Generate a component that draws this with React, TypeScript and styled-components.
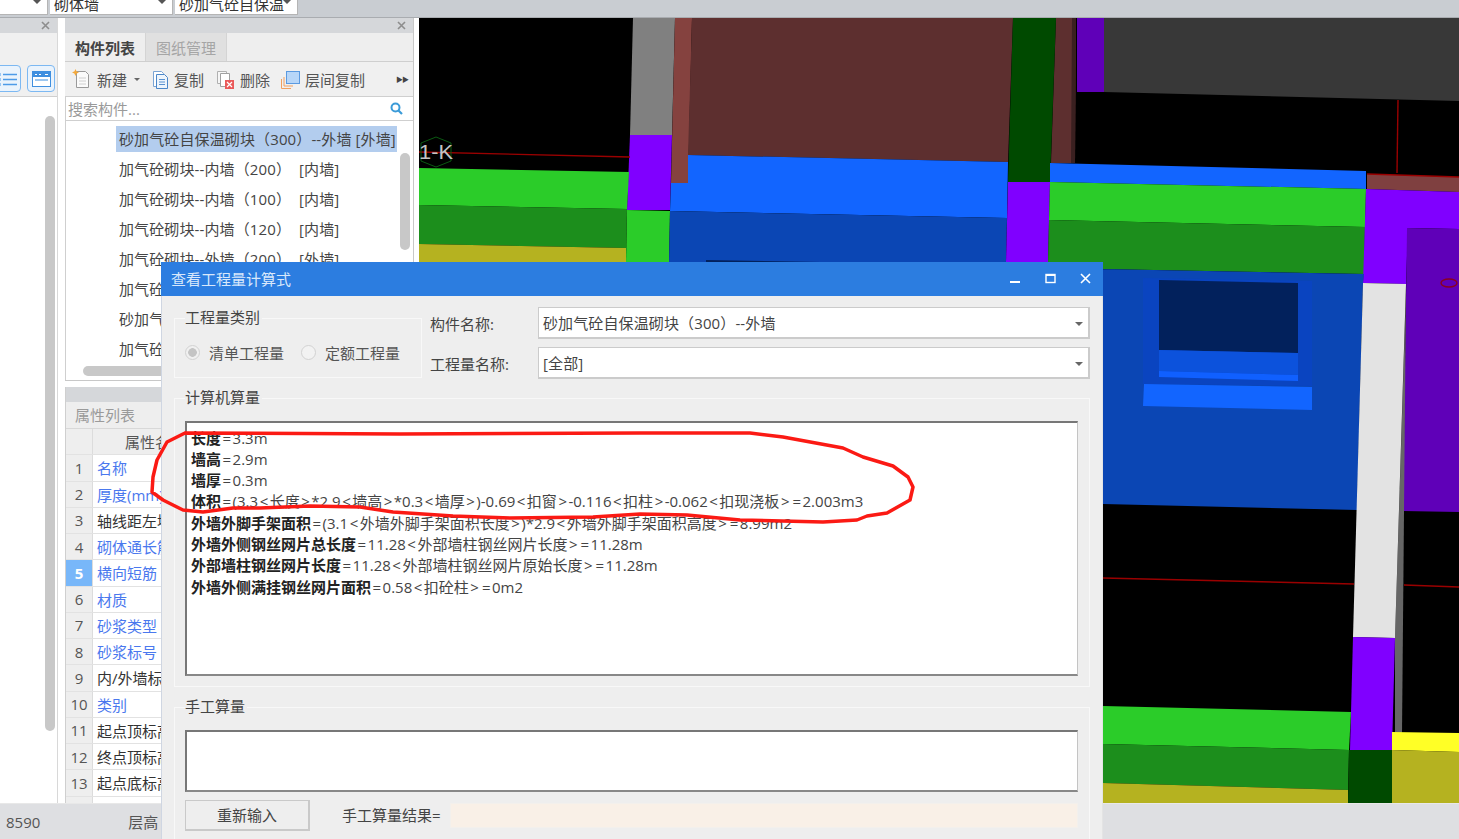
import React from "react";
import styled, { createGlobalStyle } from "styled-components";

const FONT = `"Open Sans", "Noto Sans CJK SC", "Liberation Sans", sans-serif`;

const Global = createGlobalStyle`
  html, body { margin: 0; padding: 0; background: #fff; }
  * { box-sizing: border-box; }
  body { font-family: ${FONT}; font-size: 15px; color: #333; }
`;

const Page = styled.div`
  position: relative;
  width: 1459px;
  height: 839px;
  overflow: hidden;
  display: flex;
  flex-direction: column;
  background: #fff;
`;

const TopBar = styled.div`
  flex: 0 0 18px;
  display: flex;
  gap: 2px;
  background: #c9cdd2;
  border-bottom: 1px solid #a9acb0;
`;
const ComboStub = styled.div<{ $w: number }>`
  position: relative;
  width: ${(p) => p.$w}px;
  height: 15px;
  background: #fff;
  border-right: 1px solid #b5b5b5;
  border-bottom: 1px solid #b5b5b5;
  overflow: hidden;
  padding-left: 4px;
  font-size: 15px;
  line-height: 8px;
  white-space: nowrap;
  color: #333;
  &::after {
    content: "";
    position: absolute;
    right: 6px;
    top: 0;
    border: 4px solid transparent;
    border-top-color: #555;
  }
`;

const Middle = styled.div`
  flex: 1;
  min-height: 0;
  display: flex;
`;

const LeftPanel = styled.div`
  flex: 0 0 58px;
  display: flex;
  flex-direction: column;
  overflow: hidden;
  border-right: 1px solid #d8d8d8;
`;
const PanelHead = styled.div`
  flex: 0 0 15px;
  background: #d5d7da;
  display: flex;
  justify-content: flex-end;
  align-items: center;
  padding-right: 7px;
`;
const LeftTools = styled.div`
  flex: 0 0 64px;
  background: #f0f0f0;
  border-bottom: 1px solid #cfcfcf;
  display: flex;
  gap: 6px;
  padding: 32px 2px 0 0;
  justify-content: flex-end;
`;
const ViewBtn = styled.div`
  flex: 0 0 28px;
  height: 27px;
  border: 1px solid #7cb8f2;
  border-radius: 4px;
  background: #eaf3fc;
  display: flex;
  align-items: center;
  justify-content: center;
`;
const LeftBody = styled.div`
  flex: 1;
  padding: 19px 0 0 45px;
`;
const VThumb = styled.div`
  width: 10px;
  height: 615px;
  border-radius: 5px;
  background: #c8c8c8;
`;

const Gutter = styled.div<{ $w: number }>`
  flex: 0 0 ${(p) => p.$w}px;
  background: #fff;
`;

const ComponentColumn = styled.div`
  flex: 0 0 349px;
  display: flex;
  flex-direction: column;
  gap: 6px;
`;
const ListPanel = styled.div`
  flex: 0 0 363px;
  display: flex;
  flex-direction: column;
  border-right: 1px solid #c8c8c8;
  border-bottom: 1px solid #c8c8c8;
  overflow: hidden;
`;
const Tabs = styled.div`
  flex: 0 0 29px;
  display: flex;
  background: #eee;
  border-bottom: 1px solid #cfcfcf;
`;
const Tab = styled.div<{ $active?: boolean }>`
  width: 81px;
  display: flex;
  align-items: center;
  justify-content: center;
  font-weight: ${(p) => (p.$active ? 700 : 400)};
  color: ${(p) => (p.$active ? "#444" : "#a5a5a5")};
  background: ${(p) => (p.$active ? "#eee" : "#e0e0e0")};
  border-right: 1px solid #d4d4d4;
`;
const Tools = styled.div`
  flex: 0 0 35px;
  display: flex;
  align-items: center;
  background: #f0f0f0;
  border-bottom: 1px solid #cfcfcf;
  padding-left: 7px;
  color: #555;
`;
const Tool = styled.div<{ $gap: number }>`
  display: flex;
  align-items: center;
  gap: 5px;
  margin-right: ${(p) => p.$gap}px;
  white-space: nowrap;
`;
const Caret = styled.span`
  width: 0;
  height: 0;
  border: 3.5px solid transparent;
  border-top-color: #666;
  margin: 4px 0 0 2px;
`;
const More = styled.span`
  margin-left: auto;
  margin-right: 5px;
  font-size: 7px;
  letter-spacing: -1px;
  color: #444;
`;
const Search = styled.div`
  flex: 0 0 24px;
  display: flex;
  align-items: center;
  justify-content: space-between;
  padding: 0 10px 0 2px;
  background: #fff;
  border-bottom: 1px solid #cfcfcf;
  border-left: 1px solid #cfcfcf;
  color: #9a9a9a;
`;
const List = styled.div`
  position: relative;
  flex: 1;
  padding: 5px 0 0 50px;
  background: #fff;
  overflow: hidden;
  border-left: 1px solid #cfcfcf;
`;
const ListRow = styled.div<{ $selected?: boolean }>`
  width: 281px;
  height: 30px;
  display: flex;
  align-items: center;
  padding: 0 0 2px 3px;
  white-space: pre;
  overflow: hidden;
  letter-spacing: 0.12px;
  color: #444;
  &:first-child {
    height: 26px;
    margin-bottom: 2px;
  }
  background: ${(p) => (p.$selected ? "#b3cdee" : "transparent")};
`;
const ListVThumb = styled.div`
  position: absolute;
  left: 334px;
  top: 32px;
  width: 10px;
  height: 97px;
  border-radius: 5px;
  background: #c8c8c8;
`;
const ListHThumb = styled.div`
  position: absolute;
  left: 17px;
  bottom: 4px;
  width: 200px;
  height: 10px;
  border-radius: 5px;
  background: #c8c8c8;
`;

const PropPanel = styled.div`
  flex: 1;
  min-height: 0;
  display: flex;
  flex-direction: column;
  overflow: hidden;
  border-left: 1px solid #cfcfcf;
`;
const PropHead = styled.div`
  flex: 0 0 15px;
  background: #d5d7da;
`;
const PropTitle = styled.div`
  flex: 0 0 27px;
  background: #eee;
  display: flex;
  align-items: center;
  padding: 0 0 2px 9px;
  color: #9a9a9a;
  border-bottom: 1px solid #d8d8d8;
`;
const PropRow = styled.div`
  flex: 0 0 26.25px;
  display: grid;
  grid-template-columns: 27px 1fr;
  border-bottom: 1.5px solid #e2e2e2;
`;
const PropHeadRow = styled(PropRow)`
  background: #eee;
`;
const NumCell = styled.div<{ $active?: boolean }>`
  display: flex;
  align-items: center;
  justify-content: center;
  font-size: 15px;
  font-weight: ${(p) => (p.$active ? 700 : 400)};
  color: ${(p) => (p.$active ? "#fff" : "#555")};
  background: ${(p) => (p.$active ? "#78b7f9" : "#eee")};
  border-right: 1.5px solid #dcdcdc;
`;
const NameCell = styled.div<{ $link?: boolean }>`
  display: flex;
  align-items: center;
  padding-left: 4px;
  white-space: nowrap;
  background: #fff;
  color: ${(p) => (p.$link ? "#4a78ee" : "#333")};
`;
const HeadCell = styled.div`
  display: flex;
  align-items: center;
  padding-left: 32px;
  color: #555;
`;

const Viewport = styled.div`
  flex: 1;
  min-width: 0;
  background: #000;
  line-height: 0;
`;
const Scene = styled.svg`
  display: block;
  width: 100%;
  height: 100%;
`;

const StatusBar = styled.div`
  flex: 0 0 36px;
  display: flex;
  align-items: center;
  gap: 88px;
  padding-left: 6px;
  background: #dedfe2;
  border-top: 1px solid #e8e8e8;
  color: #555;
`;

const Dialog = styled.div`
  position: absolute;
  left: 161px;
  top: 262px;
  width: 942px;
  height: 577px;
  display: flex;
  flex-direction: column;
  background: #eee;
  border-left: 1px solid #cfd6e2;
  border-right: 1px solid #e4e4e4;
`;
const TitleBar = styled.div`
  flex: 0 0 34px;
  margin: 0 -1px;
  display: flex;
  align-items: center;
  justify-content: space-between;
  padding: 0 12px 2px 10px;
  background: #2c7de0;
  color: #d9e8fb;
`;
const WinButtons = styled.div`
  display: flex;
  gap: 24px;
  align-items: center;
`;
const DialogBody = styled.div`
  flex: 1;
  min-height: 0;
  padding: 11px 12px 0 12px;
  overflow: hidden;
`;
const TopRow = styled.div`
  display: flex;
  height: 72px;
`;
const Group = styled.div`
  border: 1px solid #f8f8f8;
  padding: 0 11px 0 10px;
`;
const CategoryGroup = styled(Group)`
  flex: 0 0 248px;
  height: 60px;
  margin-top: 11px;
`;
const GroupTitle = styled.div`
  width: fit-content;
  height: 20px;
  margin: -12px 0 1px 0;
  padding-right: 2px;
  line-height: 20px;
  background: #eee;
  color: #444;
`;
const Radios = styled.div`
  display: flex;
  align-items: center;
  gap: 17px;
  margin-top: 15px;
  color: #555;
`;
const RadioItem = styled.div`
  display: flex;
  align-items: center;
  gap: 9px;
`;
const RadioDot = styled.span<{ $on?: boolean }>`
  width: 15px;
  height: 15px;
  border-radius: 50%;
  border: 1px solid #d2d2d2;
  background: ${(p) =>
    p.$on
      ? "radial-gradient(circle, #c4c4c4 0 4px, #f0f0f0 4.6px)"
      : "#f2f2f2"};
`;
const FormCol = styled.div`
  flex: 1;
  margin-left: 8px;
  display: flex;
  flex-direction: column;
  gap: 8px;
`;
const FormRow = styled.div`
  display: flex;
  align-items: center;
  height: 32px;
`;
const FormLabel = styled.div`
  flex: 0 0 108px;
  color: #444;
`;
const Combo = styled.div`
  position: relative;
  flex: 1;
  height: 32px;
  display: flex;
  align-items: center;
  padding-left: 4px;
  background: #fff;
  border: 2px solid #cbcbcb;
  border-width: 1px 2px 2px 1px;
  color: #444;
  white-space: pre;
  letter-spacing: 0.12px;
  &::after {
    content: "";
    position: absolute;
    right: 5px;
    top: 14px;
    border: 4px solid transparent;
    border-top-color: #666;
  }
`;
const CalcGroup = styled(Group)`
  margin-top: 19px;
  height: 289px;
`;
const ManualGroup = styled(Group)`
  margin-top: 20px;
  height: 140px;
`;
const GroupGap = styled.div`
  height: 13px;
`;
const TextBox = styled.div<{ $h: number }>`
  height: ${(p) => p.$h}px;
  background: #fff;
  border: 1px solid #c4c4c4;
  border-top: 2px solid #777;
  border-left: 2px solid #777;
  border-bottom: 2px solid #888;
  overflow: hidden;
`;
const CalcLines = styled.div`
  padding: 4.5px 0 0 4px;
`;
const CalcLine = styled.div`
  height: 21.3px;
  line-height: 21.3px;
  white-space: pre;
  color: #444;
  b {
    font-weight: 700;
    color: #222;
  }
`;
const Op = styled.span`
  padding: 0 1.5px;
`;
const ResultRow = styled.div`
  display: flex;
  align-items: center;
  margin-top: 8px;
`;
const RetypeBtn = styled.div`
  flex: 0 0 125px;
  height: 31px;
  display: flex;
  align-items: center;
  justify-content: center;
  padding-bottom: 2px;
  border: 1px solid #c9c9c9;
  border-width: 1px 2px 2px 1px;
  color: #444;
`;
const ResultLabel = styled.div`
  margin-left: 32px;
  padding-bottom: 2px;
  color: #444;
  white-space: nowrap;
`;
const ResultInput = styled.div`
  margin-left: auto;
  width: 628px;
  height: 25px;
  background: #f9f0e7;
  border: 1px solid #f3f0ec;
`;

const Annotation = styled.svg`
  position: absolute;
  left: 0;
  top: 0;
  pointer-events: none;
`;

const polys: [string, string][] = [
  ["633,18 675,18 672,135 630,135", "#808080"],
  ["675,18 692,18 688,183 671,183", "#85423f"],
  ["692,18 1013,18 1008,162 688,155", "#5d2f2f"],
  ["1056,18 1076,18 1075,163 1051,163", "#5d2f2f"],
  ["1072,18 1076,18 1075,163 1071,163", "#3a2020"],
  ["1013,18 1056,18 1050,182 1008,182", "#004a00"],
  ["1077,18 1104,18 1104,92 1077,92", "#5f00b8"],
  ["1104,18 1459,18 1459,101 1104,92", "#383838"],
  ["630,135 672,135 670,210 627,210", "#8000ff"],
  ["419,168 629,172 627,209 419,205", "#2bcc29"],
  ["419,205 627,209 626,248 419,244", "#1c8e1c"],
  ["419,244 626,248 626,262 419,262", "#b5b220"],
  ["627,210 670,211 669,262 626,262", "#2bcc29"],
  ["688,155 1008,162 1007,218 670,211 671,183 688,183", "#1265ff"],
  ["670,211 1007,218 1006,262 669,262", "#0b46b4"],
  ["706,260 820,262 706,262", "#02215c"],
  ["1008,182 1050,182 1048,262 1006,262", "#8000ff"],
  ["1050,163 1366,171 1366,189 1050,182", "#1265ff"],
  ["1050,182 1366,189 1365,227 1049,220", "#2bcc29"],
  ["1049,220 1365,227 1364,274 1048,268 1048,262", "#1c8e1c"],
  ["1367,174 1459,177 1459,192 1367,189", "#7f4040"],
  ["1366,189 1459,192 1459,229 1408,228 1406,284 1363,283", "#8000ff"],
  ["1407,228 1459,229 1459,512 1403,511", "#5f00b8"],
  ["1103,262 1048,262 1048,268 1364,274 1363,283 1357,510 1103,504", "#0b46b4"],
  ["1143,278 1312,281 1312,386 1143,384", "#0a44c0"],
  ["1159,280 1298,283 1298,353 1159,350", "#02215c"],
  ["1159,350 1298,353 1298,375 1159,371", "#0c52dc"],
  ["1159,371 1298,375 1298,381 1159,377", "#1060ff"],
  ["1144,384 1312,387 1312,410 1143,406", "#1265ff"],
  ["1406,290 1402,733 1395,733 1395,638", "#666666"],
  ["1363,283 1406,284 1395,638 1353,637", "#e3e3e3"],
  ["1353,637 1395,638 1392,750 1350,750", "#8000ff"],
  ["1103,706 1351,712 1349,750 1103,744", "#2bcc29"],
  ["1103,744 1349,750 1348,790 1103,783", "#1c8e1c"],
  ["1103,783 1348,790 1348,803 1103,803", "#b5b220"],
  ["1349,750 1392,750 1392,803 1348,803", "#004a00"],
  ["1392,732 1459,733 1459,752 1392,750", "#ffff26"],
  ["1392,750 1459,752 1459,803 1392,803", "#b5b220"],
];

const redLines: string[] = [
  "419,152 630,157",
  "1367,174 1459,177",
  "1398,100 1397,173",
  "1103,578 1354,584",
  "1404,585 1459,587",
];

const redPath =
  "185,433 167,442 157,460 153,477 152,492 163,500 183,510 203,512 233,508 260,508 310,506 360,507 393,512 453,516 510,518 593,517 640,514 687,515 740,520 823,522 857,520 867,516 887,513 910,500 913,487 908,477 893,466 863,457 843,448 783,437 750,433 640,433 400,434 185,433";

const listRows = [
  "砂加气砼自保温砌块（300）--外墙 [外墙]",
  "加气砼砌块--内墙（200）  [内墙]",
  "加气砼砌块--内墙（100）  [内墙]",
  "加气砼砌块--内墙（120）  [内墙]",
  "加气砼砌块--外墙（200）  [外墙]",
  "加气砼砌块--外墙（100）  [外墙]",
  "砂加气砼砌块--外墙（300）  [外墙]",
  "加气砼砌块--内墙（300）  [内墙]",
];

const props: [string, boolean][] = [
  ["名称", true],
  ["厚度(mm)", true],
  ["轴线距左墙皮距离(mm)", false],
  ["砌体通长筋", true],
  ["横向短筋", true],
  ["材质", true],
  ["砂浆类型", true],
  ["砂浆标号", true],
  ["内/外墙标志", false],
  ["类别", true],
  ["起点顶标高(m)", false],
  ["终点顶标高(m)", false],
  ["起点底标高(m)", false],
  ["", false],
];

const calc: [string, string][] = [
  ["长度", "=3.3m"],
  ["墙高", "=2.9m"],
  ["墙厚", "=0.3m"],
  ["体积", "=(3.3<长度>*2.9<墙高>*0.3<墙厚>)-0.69<扣窗>-0.116<扣柱>-0.062<扣现浇板>=2.003m3"],
  ["外墙外脚手架面积", "=(3.1<外墙外脚手架面积长度>)*2.9<外墙外脚手架面积高度>=8.99m2"],
  ["外墙外侧钢丝网片总长度", "=11.28<外部墙柱钢丝网片长度>=11.28m"],
  ["外部墙柱钢丝网片长度", "=11.28<外部墙柱钢丝网片原始长度>=11.28m"],
  ["外墙外侧满挂钢丝网片面积", "=0.58<扣砼柱>=0m2"],
];

const CloseX = () => (
  <svg width="9" height="9" viewBox="0 0 9 9">
    <path d="M1 1l7 7M8 1L1 8" stroke="#8d8d8d" strokeWidth="1.6" />
  </svg>
);

const NewIcon = () => (
  <svg width="20" height="20" viewBox="0 0 20 20">
    <path d="M4.5 2.5h9l3 3v13h-12z" fill="#fbfbfb" stroke="#9a9a9a" />
    <path d="M7 9h7M7 12h7M7 15h7" stroke="#d0d0d0" />
    <path d="M3.5 0l1 2.3L7 3.5 4.6 4.6 3.5 7 2.4 4.6 0 3.5l2.5-1.2z" fill="#f4a93c" />
  </svg>
);
const CopyIcon = () => (
  <svg width="17" height="19" viewBox="0 0 17 19">
    <path d="M1.5 1.5h8l2 2v13h-10z" fill="#fff" stroke="#7aa4d4" />
    <path d="M4.5 4.5h8l3 3v11h-11z" fill="#eef5fc" stroke="#4d87c8" />
    <path d="M7 9.5h6M7 12h6M7 14.5h6" stroke="#5b92d0" />
  </svg>
);
const DeleteIcon = () => (
  <svg width="19" height="19" viewBox="0 0 19 19">
    <path d="M1.5 1.5h9v12h-9z" fill="#f6f6f6" stroke="#b0b0b0" />
    <path d="M4.5 3.5h9v13h-9z" fill="#fff" stroke="#a0a0a0" />
    <rect x="9" y="10" width="9" height="9" fill="#ea5a5a" />
    <path d="M11 12l5 5M16 12l-5 5" stroke="#fff" strokeWidth="1.2" />
  </svg>
);
const FloorCopyIcon = () => (
  <svg width="19" height="19" viewBox="0 0 19 19">
    <path d="M.5 9v9.5H10M3 7v9h9" fill="none" stroke="#f0a060" />
    <rect x="5.5" y="1.5" width="13" height="12" fill="#b7d6f8" stroke="#5b9ae0" />
  </svg>
);
const SearchIcon = () => (
  <svg width="13" height="13" viewBox="0 0 13 13">
    <circle cx="5.5" cy="5.5" r="4" fill="none" stroke="#3b9bd8" strokeWidth="2" />
    <path d="M8.5 8.5L12 12" stroke="#3b9bd8" strokeWidth="2.2" />
  </svg>
);
const ListViewIcon = () => (
  <svg width="22" height="17" viewBox="0 0 22 17">
    <path d="M0 3h4v3H0zM0 8h4v3H0zM0 13h4v3H0z" fill="#fff" stroke="#4d9be8" />
    <path d="M7 4.5h14M7 9.5h14M7 14.5h14" stroke="#4d9be8" strokeWidth="1.4" />
  </svg>
);
const FormViewIcon = () => (
  <svg width="19" height="16" viewBox="0 0 19 16">
    <rect x=".5" y=".5" width="18" height="15" fill="#fff" stroke="#3f8fdf" />
    <rect x="1" y="1" width="17" height="5" fill="#3f8fdf" />
    <path d="M3 3.5h2M7 3.5h2M13 3.5h3" stroke="#fff" />
    <path d="M3 9h13" stroke="#9cc6ef" strokeWidth="2" />
  </svg>
);

const Formula = ({ text }: { text: string }) => (
  <>
    {text.split(/([=<>])/).map((part, i) =>
      /^[=<>]$/.test(part) ? <Op key={i}>{part}</Op> : <span key={i}>{part}</span>
    )}
  </>
);

export default function App() {
  return (
    <Page>
      <Global />
      <TopBar>
        <ComboStub $w={48} />
        <ComboStub $w={123}>砌体墙</ComboStub>
        <ComboStub $w={123}>砂加气砼自保温</ComboStub>
      </TopBar>
      <Middle>
        <LeftPanel>
          <PanelHead>
            <CloseX />
          </PanelHead>
          <LeftTools>
            <ViewBtn>
              <ListViewIcon />
            </ViewBtn>
            <ViewBtn>
              <FormViewIcon />
            </ViewBtn>
          </LeftTools>
          <LeftBody>
            <VThumb />
          </LeftBody>
        </LeftPanel>
        <Gutter $w={7} />
        <ComponentColumn>
          <ListPanel>
            <PanelHead>
              <CloseX />
            </PanelHead>
            <Tabs>
              <Tab $active>构件列表</Tab>
              <Tab>图纸管理</Tab>
            </Tabs>
            <Tools>
              <Tool $gap={12}>
                <NewIcon />
                新建
                <Caret />
              </Tool>
              <Tool $gap={12}>
                <CopyIcon />
                复制
              </Tool>
              <Tool $gap={11}>
                <DeleteIcon />
                删除
              </Tool>
              <Tool $gap={0}>
                <FloorCopyIcon />
                层间复制
              </Tool>
              <More>▶▶</More>
            </Tools>
            <Search>
              搜索构件...
              <SearchIcon />
            </Search>
            <List>
              {listRows.map((r, i) => (
                <ListRow key={r} $selected={i === 0}>
                  {r}
                </ListRow>
              ))}
              <ListVThumb />
              <ListHThumb />
            </List>
          </ListPanel>
          <PropPanel>
            <PropHead />
            <PropTitle>属性列表</PropTitle>
            <PropHeadRow>
              <NumCell />
              <HeadCell>属性名称</HeadCell>
            </PropHeadRow>
            {props.map(([name, link], i) => (
              <PropRow key={i}>
                <NumCell $active={i === 4}>{i < 13 ? i + 1 : ""}</NumCell>
                <NameCell $link={link}>{name}</NameCell>
              </PropRow>
            ))}
          </PropPanel>
        </ComponentColumn>
        <Gutter $w={5} />
        <Viewport>
          <Scene viewBox="419 18 1040 785" preserveAspectRatio="none">
            <rect x="419" y="18" width="1040" height="785" fill="#000" />
            {polys.map(([p, f], i) => (
              <polygon key={i} points={p} fill={f} />
            ))}
            {redLines.map((p) => (
              <polyline key={p} points={p} fill="none" stroke="#9a0000" strokeWidth="1.4" />
            ))}
            <polygon
              points="436,137 451,143 451,161 436,167 421,161 421,143"
              fill="none"
              stroke="#0b5a12"
              strokeWidth="1"
            />
            <text
              x="419"
              y="159"
              fontFamily="'Liberation Sans', sans-serif"
              fontSize="20"
              fill="#c4c4c4"
              textLength="34"
              lengthAdjust="spacingAndGlyphs"
            >
              1-K
            </text>
            <ellipse cx="1449" cy="283" rx="8" ry="4" fill="none" stroke="#8a0020" strokeWidth="1.4" />
          </Scene>
        </Viewport>
      </Middle>
      <StatusBar>
        <span>8590</span>
        <span>层高</span>
      </StatusBar>

      <Dialog>
        <TitleBar>
          查看工程量计算式
          <WinButtons>
            <svg width="11" height="11" viewBox="0 0 11 11">
              <rect x="0" y="8" width="10" height="2" fill="#fff" />
            </svg>
            <svg width="11" height="11" viewBox="0 0 11 11">
              <rect x="1" y="1.5" width="9" height="8" fill="none" stroke="#fff" strokeWidth="1.4" />
              <rect x="1" y="1" width="9" height="2" fill="#fff" />
            </svg>
            <svg width="11" height="11" viewBox="0 0 11 11">
              <path d="M1 1l9 9M10 1l-9 9" stroke="#fff" strokeWidth="1.6" />
            </svg>
          </WinButtons>
        </TitleBar>
        <DialogBody>
          <TopRow>
            <CategoryGroup>
              <GroupTitle>工程量类别</GroupTitle>
              <Radios>
                <RadioItem>
                  <RadioDot $on />
                  清单工程量
                </RadioItem>
                <RadioItem>
                  <RadioDot />
                  定额工程量
                </RadioItem>
              </Radios>
            </CategoryGroup>
            <FormCol>
              <FormRow>
                <FormLabel>构件名称:</FormLabel>
                <Combo>砂加气砼自保温砌块（300）--外墙</Combo>
              </FormRow>
              <FormRow>
                <FormLabel>工程量名称:</FormLabel>
                <Combo>[全部]</Combo>
              </FormRow>
            </FormCol>
          </TopRow>
          <CalcGroup>
            <GroupTitle>计算机算量</GroupTitle>
            <GroupGap />
            <TextBox $h={255}>
              <CalcLines>
                {calc.map(([k, v]) => (
                  <CalcLine key={k}>
                    <b>{k}</b>
                    <Formula text={v} />
                  </CalcLine>
                ))}
              </CalcLines>
            </TextBox>
          </CalcGroup>
          <ManualGroup>
            <GroupTitle>手工算量</GroupTitle>
            <GroupGap />
            <TextBox $h={62} />
            <ResultRow>
              <RetypeBtn>重新输入</RetypeBtn>
              <ResultLabel>手工算量结果=</ResultLabel>
              <ResultInput />
            </ResultRow>
          </ManualGroup>
        </DialogBody>
      </Dialog>

      <Annotation width="1459" height="839" viewBox="0 0 1459 839">
        <polyline
          points={redPath}
          fill="none"
          stroke="#fb1a14"
          strokeWidth="3.5"
          strokeLinejoin="round"
          strokeLinecap="round"
        />
      </Annotation>
    </Page>
  );
}
